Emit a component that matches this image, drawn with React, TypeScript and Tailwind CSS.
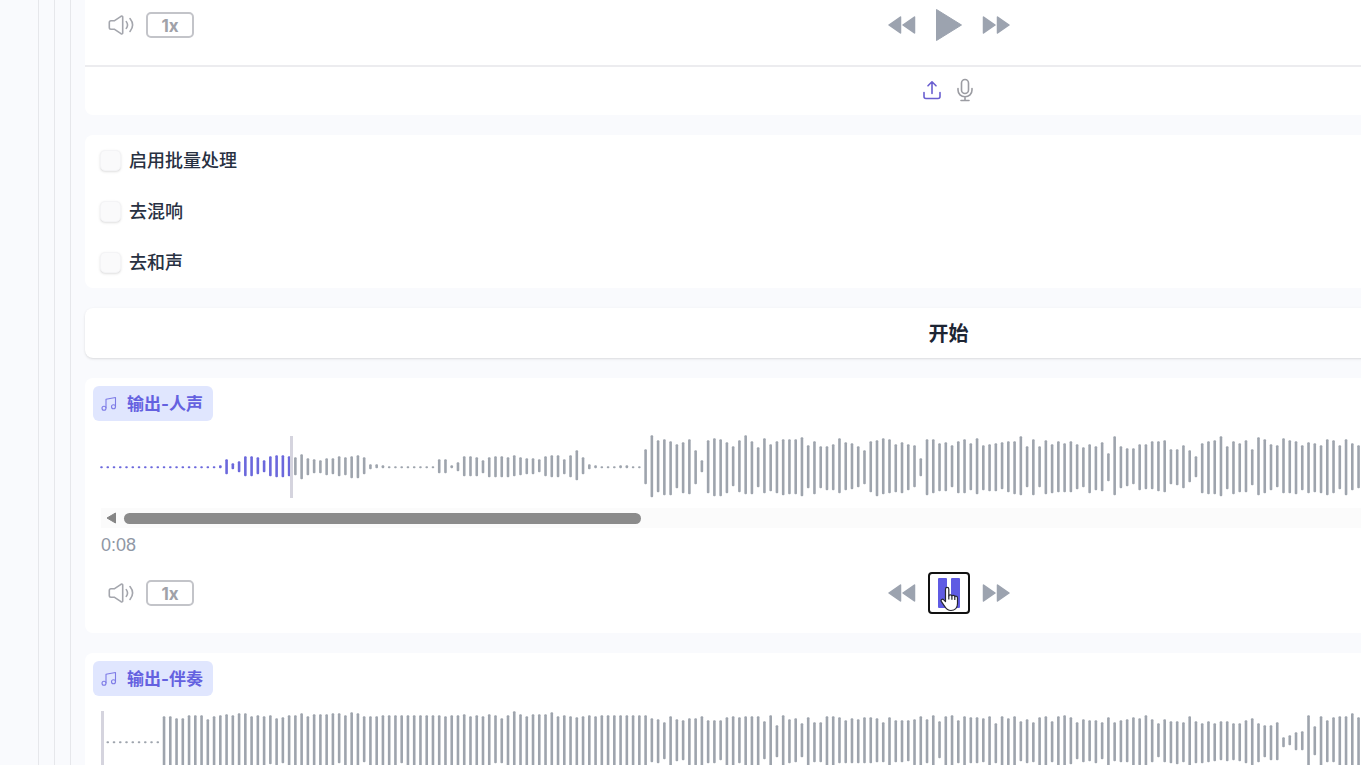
import { useState, type ReactNode } from "react";

// [above, below] the centre line, one pair per bar
const VOCALS =
  "1,1 1,1 1,1 1,1 1,1 1,1 1,1 1,1 1,1 1,1 1,1 1,1 1,1 1,1 1,1 1,1 1,1 1,1 1,1 2,1 8,7 4,2 6,5 11,9 11,9 10,7 7,5 11,9 12,10 12,10 11,9 10,8 13,12 9,8 8,6 7,6 9,8 9,7 11,9 10,8 11,11 12,11 10,7 3,2 3,1 2,1 1,1 1,1 1,1 1,1 1,1 1,1 1,1 1,1 8,6 8,6 2,1 5,4 11,9 11,9 10,9 7,6 10,10 11,10 11,10 10,10 12,9 10,8 9,7 9,7 8,5 11,9 12,10 12,10 8,7 12,10 17,13 10,7 3,2 2,1 1,1 1,1 1,1 2,1 2,1 1,1 1,1 18,17 32,30 27,25 28,28 26,28 23,21 25,26 28,27 17,17 7,5 27,26 29,29 28,29 25,26 21,19 27,25 32,27 26,27 20,20 29,26 23,24 26,26 28,28 28,27 28,27 30,29 22,21 26,27 21,21 21,23 23,23 29,26 25,23 24,22 21,20 17,17 26,25 27,29 29,27 28,26 23,25 25,26 23,23 22,20 9,9 28,28 28,26 24,24 25,24 22,20 26,26 28,26 24,23 29,27 22,23 23,24 24,24 25,22 26,25 26,27 31,28 21,20 28,28 21,20 27,27 23,26 26,25 24,25 26,25 23,22 20,20 23,26 21,23 25,24 14,14 31,28 21,21 19,19 19,17 23,23 23,22 26,22 26,24 27,25 18,17 18,18 22,21 17,15 11,10 24,26 26,27 27,27 31,29 21,22 26,27 24,25 27,25 18,18 30,28 28,26 23,23 22,20 29,26 27,26 26,27 22,23 25,26 24,25 22,26 28,28 27,26 22,22 28,28 24,23 22,21";

const BACKING =
  "0,0 1,1 1,1 1,1 1,1 1,1 1,1 1,1 1,1 1,1 26,26 26,26 24,24 24,24 27,26 27,26 27,26 23,23 26,25 27,26 28,27 27,26 29,27 29,27 26,26 27,26 26,25 27,22 24,23 25,21 27,26 27,26 29,27 26,24 28,26 28,26 28,24 29,26 29,21 27,26 30,27 29,26 26,20 26,24 26,24 27,25 27,25 27,24 27,21 27,25 27,25 27,26 27,26 27,26 27,26 26,24 27,26 27,26 28,26 26,25 27,25 26,25 28,26 27,21 24,21 27,25 31,28 28,26 26,24 28,26 28,26 28,26 30,27 26,25 27,26 26,25 25,24 26,25 27,26 26,25 27,26 27,26 27,26 27,26 27,26 27,26 27,26 27,25 24,20 23,21 20,17 26,24 23,19 22,18 24,23 24,23 26,24 22,21 22,21 22,18 25,24 26,24 25,21 26,24 26,24 26,24 21,17 27,26 17,15 27,25 23,21 24,20 19,15 25,24 20,20 20,20 26,24 26,24 25,21 22,21 24,21 23,21 25,21 25,21 24,20 20,20 25,24 22,20 22,20 22,19 23,23 26,24 23,21 27,25 21,16 26,24 27,25 22,21 26,24 25,21 25,21 24,20 26,24 19,21 26,24 24,23 26,25 21,19 23,21 20,20 25,24 26,25 21,20 26,25 27,26 25,22 20,17 23,20 22,19 22,21 20,17 25,24 20,19 22,20 23,20 25,24 24,23 27,25 23,20 19,15 23,20 21,21 21,22 20,20 26,24 21,21 19,21 21,20 19,19 21,18 21,19 19,18 19,19 22,21 24,23 19,20 17,15 17,18 20,18 5,5 7,3 10,8 11,8 27,25 16,13 26,24 22,20 25,20 26,24 26,24 29,27 25,24";

const BAR_PITCH = 6.254;

function Waveform({ peaks, progress }: { peaks: string; progress: number }) {
  const bars = peaks.split(" ").map((pair) => pair.split(",").map(Number));
  return (
    <svg className="mt-3.5 block h-16 w-full overflow-visible" aria-hidden="true">
      {bars.map(([up, down], i) => {
        const x = i * BAR_PITCH - 0.8;
        return (
          <rect
            key={i}
            x={x}
            y={32.3 - up}
            width={2.6}
            height={up + down}
            rx={1}
            fill={x < progress ? "#6b68dc" : "#9ea4ad"}
          />
        );
      })}
      <rect x={progress - 1} y={1} width={3} height={62} fill="#d5d4de" />
    </svg>
  );
}

function VolumeIcon() {
  return (
    <svg width="26" height="22" viewBox="0 0 26 22" fill="none" stroke="#a4a6ad" strokeWidth="1.6" strokeLinejoin="round" strokeLinecap="round">
      <path d="M3 6.8h3.2L13 2.3c.9-.5 1.7-.2 1.7.7v16c0 .9-.8 1.2-1.7.7L6.2 15.200H3c-1.100 0-1.700-.7-1.700-1.700v-5c0-1 .6-1.700 1.700-1.700z" />
      <path d="M18.300 7.600c1.600 2.200 1.600 4.600 0 6.800M22 4.500c3.200 4 3.200 9 0 13" />
    </svg>
  );
}

function BackwardIcon() {
  return (
    <svg width="28" height="20" viewBox="0 0 28 20" fill="#9ca3af" stroke="#9ca3af" strokeWidth="1.5" strokeLinejoin="round">
      <path d="M1 10 12.500 2v16zM15 10 26.500 2v16z" />
    </svg>
  );
}

function ForwardIcon() {
  return (
    <svg width="28" height="20" viewBox="0 0 28 20" fill="#9ca3af" stroke="#9ca3af" strokeWidth="1.5" strokeLinejoin="round">
      <path d="M1.500 2 13 10 1.500 18zM15.500 2 27 10 15.500 18z" />
    </svg>
  );
}

function PlayIcon() {
  return (
    <svg width="28" height="34" viewBox="0 0 28 34" fill="#9ca3af" stroke="#9ca3af" strokeLinejoin="round">
      <path d="M1.500 1.500 26.500 17 1.500 32.500z" />
    </svg>
  );
}

function PauseIcon() {
  return (
    <svg width="24" height="30" viewBox="0 0 24 30" fill="#5f5be3">
      <rect x="1" width="9" height="30" rx="1" />
      <rect x="14" width="9" height="30" rx="1" />
    </svg>
  );
}

function MusicIcon() {
  return (
    <svg width="16" height="16" viewBox="0 0 16 16" fill="none" stroke="#7d7be6" strokeWidth="1.1" strokeLinejoin="round">
      <path d="M5 12.200V3.200l9.500-1.700v9.200" />
      <circle cx="3" cy="12.2" r="2" />
      <circle cx="12.5" cy="10.8" r="2" />
    </svg>
  );
}

function UploadIcon() {
  return (
    <svg width="20" height="20" viewBox="0 0 20 20" fill="none" stroke="#6a5fd0" strokeWidth="1.6" strokeLinecap="round" strokeLinejoin="round">
      <path d="M10 13.500V2M6 5.800 10 1.800l4 4M2 12.500v4c0 1.300.8 2 2 2h12c1.200 0 2-.7 2-2v-4" />
    </svg>
  );
}

function MicIcon() {
  return (
    <svg width="18" height="24" viewBox="0 0 18 24" fill="none" stroke="#9b9ca2" strokeWidth="1.6" strokeLinecap="round">
      <rect x="5.5" y="1.5" width="7" height="14" rx="3.5" />
      <path d="M2 10.500v1.500c0 4 3 6.700 7 6.700s7-2.700 7-6.700v-1.500M9 18.700v3.600M5 22.500h8" />
    </svg>
  );
}

function HandCursor() {
  return (
    <svg
      className="pointer-events-none absolute left-2.5 top-3"
      width="20"
      height="26"
      viewBox="0 0 20 26"
      fill="#fff"
      stroke="#26262e"
      strokeWidth="1.2"
      strokeLinejoin="round"
    >
      <path d="M5.500 15.500V3.200c0-2.400 3.300-2.400 3.300 0v6.600c.2-1.400 2.900-1.400 3.100.3 .4-1.200 2.700-1 2.900.6.600-1 2.700-.6 2.700 1.200v5.600c0 4.200-2.700 7-6.500 7-3.200 0-4.700-1.400-6-3.700L1.300 15.400c-.9-1.600 1.200-3 2.500-1.600z" />
      <path d="M8.800 9.500v4M11.900 10.200v3.500M14.800 11v3" fill="none" />
    </svg>
  );
}

function Controls({ playing = false }: { playing?: boolean }) {
  return (
    <div className="grid grid-cols-3 items-center pb-[19px]">
      <div className="flex items-center gap-3 pl-[23px]">
        <button type="button" aria-label="音量">
          <VolumeIcon />
        </button>
        <button
          type="button"
          className="h-[26px] w-12 rounded-[5px] border-2 border-[#c3c4c9] pt-0.5 text-[17px] leading-5 font-bold text-[#a0a1a8]"
        >
          1x
        </button>
      </div>
      <div className="flex items-center justify-center gap-3">
        <button type="button" aria-label="后退">
          <BackwardIcon />
        </button>
        {playing ? (
          <button
            type="button"
            aria-label="暂停"
            className="relative flex size-[42px] items-center justify-center rounded-[4px] border-2 border-[#111]"
          >
            <PauseIcon />
            <HandCursor />
          </button>
        ) : (
          <button type="button" aria-label="播放" className="flex size-[42px] items-center justify-center">
            <PlayIcon />
          </button>
        )}
        <button type="button" aria-label="前进">
          <ForwardIcon />
        </button>
      </div>
    </div>
  );
}

function BlockLabel({ text }: { text: string }) {
  return (
    <div className="ml-2 flex h-[35px] w-[120px] items-center gap-2.5 rounded-md bg-[#e0e6fe] pl-2 text-[17px] leading-6 font-bold whitespace-nowrap text-[#6461e0]">
      <MusicIcon />
      <span>{text}</span>
    </div>
  );
}

function OutputCard({
  label,
  peaks,
  progress,
  children,
}: {
  label: string;
  peaks: string;
  progress: number;
  children?: ReactNode;
}) {
  return (
    <section className="rounded-lg bg-white pt-2">
      <BlockLabel text={label} />
      <div className="px-4">
        <Waveform peaks={peaks} progress={progress} />
        <div className="mt-[9px] flex h-5 items-center bg-[#fbfbfb] pl-[5px]">
          <svg width="11" height="12" viewBox="0 0 11 12" fill="#858585" stroke="#858585" strokeLinejoin="round" aria-hidden="true">
            <path d="M1 6 9.500 1v10z" />
          </svg>
          <div className="ml-[7px] h-[11px] w-[30.6%] rounded-full bg-[#8b8b8b]" />
        </div>
      </div>
      {children}
    </section>
  );
}

export default function App() {
  const [checked, setChecked] = useState<Record<string, boolean>>({});
  const options = ["启用批量处理", "去混响", "去和声"];

  return (
    <div className="h-screen overflow-hidden bg-[#f9fafd] font-['Inter','Noto_Sans_CJK_SC',sans-serif] text-[#283142]">
      {/* Wider than the window, the right part runs off screen */}
      <div className="w-[139.4%] px-[38px]">
        <div className="border-x border-[#e6e7eb] px-[15px]">
          <div className="border-x border-[#e6e7eb] px-[15px]">
            <main className="flex flex-col gap-5 border-x border-[#e6e7eb] px-[14px]">
              <section className="rounded-b-lg bg-white pt-1">
                <Controls />
                <div className="flex h-[50px] items-center justify-center gap-3.5 border-t-2 border-[#ececef] pr-0.5 pb-0.5">
                  <button type="button" aria-label="上传">
                    <UploadIcon />
                  </button>
                  <button type="button" aria-label="录音">
                    <MicIcon />
                  </button>
                </div>
              </section>

              <section className="rounded-lg bg-white">
                {options.map((option) => (
                  <label key={option} className="flex h-[51px] items-center gap-2 pl-[15px] text-[18px] leading-6 font-medium">
                    <input
                      type="checkbox"
                      checked={!!checked[option]}
                      onChange={(e) => setChecked({ ...checked, [option]: e.target.checked })}
                      className="size-[21px] appearance-none rounded-[5px] border border-[#f4f4f6] bg-[#fafafb] shadow-sm checked:bg-indigo-500"
                    />
                    {option}
                  </label>
                ))}
              </section>

              <button type="button" className="h-[50px] rounded-lg bg-white pt-0.5 text-[20px] leading-6 font-bold text-[#1d2533] shadow">
                开始
              </button>

              <OutputCard label="输出-人声" peaks={VOCALS} progress={190}>
                <div className="mt-[5px] mb-[15px] px-4 font-['Liberation_Sans',sans-serif] text-[18px] leading-6 text-[#9097a5]">
                  0:08
                </div>
                <Controls playing />
              </OutputCard>
              <OutputCard label="输出-伴奏" peaks={BACKING} progress={1} />
            </main>
          </div>
        </div>
      </div>
    </div>
  );
}
